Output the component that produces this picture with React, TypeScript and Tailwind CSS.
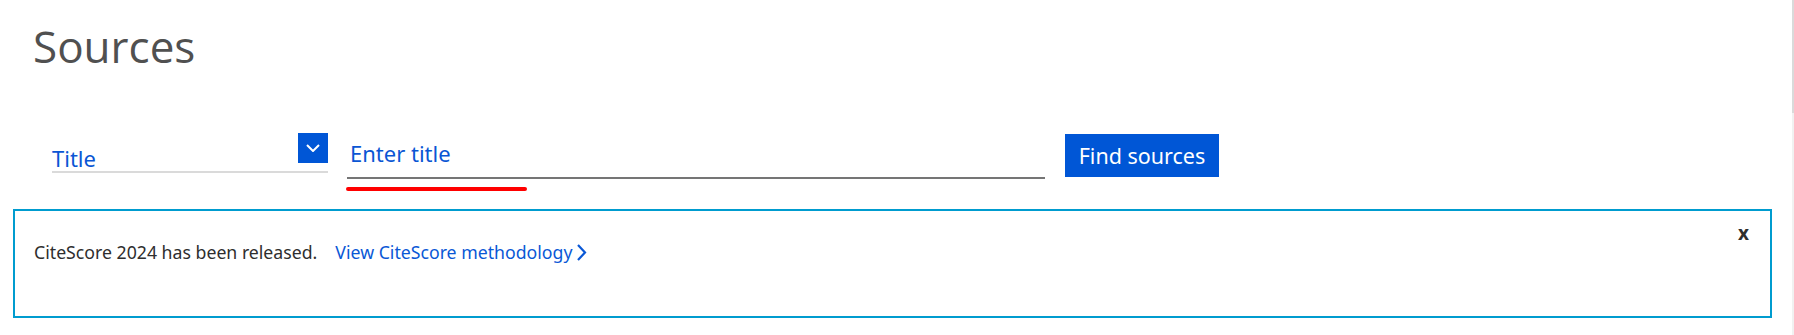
import React from 'react';

const sans = 'font-["Noto_Sans",sans-serif]';

function ChevronDown() {
  return (
    <svg width="14" height="8" viewBox="0 0 14 8" fill="none">
      <polyline points="1,1 7,7 13,1" stroke="#ffffff" strokeWidth="2" />
    </svg>
  );
}

function ChevronRight() {
  return (
    <svg width="11" height="17" viewBox="0 0 11 17" fill="none">
      <polyline points="2,1 9,8.5 2,16" stroke="#0a58d6" strokeWidth="2.2" />
    </svg>
  );
}

export default function App() {
  return (
    <div className="flex h-[335px] w-[1794px] overflow-hidden bg-white">
      <div className="flex-1 pl-[13px] pr-[20px]">
        <h1 className='mt-[25px] pl-[20px] font-["Open_Sans",sans-serif] text-[44px] leading-[43px] text-[#505050]'>
          Sources
        </h1>

        {/* Search form */}
        <div className={`mt-[65px] flex items-start pl-[39px] ${sans}`}>
          <div className="flex w-[276px] flex-col">
            <div className="flex h-[38px]">
              <span className="flex-1 self-end text-[22px] leading-[26px] text-[#0a56d4]">Title</span>
              <button className="flex h-[30px] w-[30px] items-center justify-center bg-[#0056d6]">
                <ChevronDown />
              </button>
            </div>
            <div className="h-[2px] bg-[#dadada]" />
          </div>

          <div className="ml-[19px] flex w-[698px] flex-col pt-[7px]">
            <span className="pl-[3px] text-[22px] leading-[26px] text-[#0a56d4]">Enter title</span>
            <div className="mt-[11px] h-[2px] bg-[#757575]" />
            <div className="-ml-[1px] mt-[8px] h-[4px] w-[181px] rounded-full bg-[#ff0000]" />
          </div>

          <button className="ml-[20px] mt-[1px] h-[43px] w-[154px] bg-[#0056d6] text-[21.5px] leading-[26px] text-white">
            Find sources
          </button>
        </div>

        {/* CiteScore notice */}
        <div className={`mt-[18px] flex h-[109px] items-start justify-between border-2 border-[#009ccf] ${sans}`}>
          <div className="flex items-center pl-[19px] pt-[29px]">
            <span className="text-[17.7px] leading-[24px] text-[#2e2e2e]">CiteScore 2024 has been released.</span>
            <a className="ml-[18px] flex items-center gap-[4px] text-[17.7px] leading-[24px] text-[#0a58d6]">
              View CiteScore methodology
              <ChevronRight />
            </a>
          </div>
          <span className="pr-[21px] pt-[10px] text-[19px] font-bold leading-[24px] text-[#2e2e2e]">x</span>
        </div>
      </div>

      {/* scrollbar edge */}
      <div className="flex w-[2px] flex-col bg-[#f1f1f1]">
        <div className="h-[113px] bg-[#dadada]" />
      </div>
    </div>
  );
}
